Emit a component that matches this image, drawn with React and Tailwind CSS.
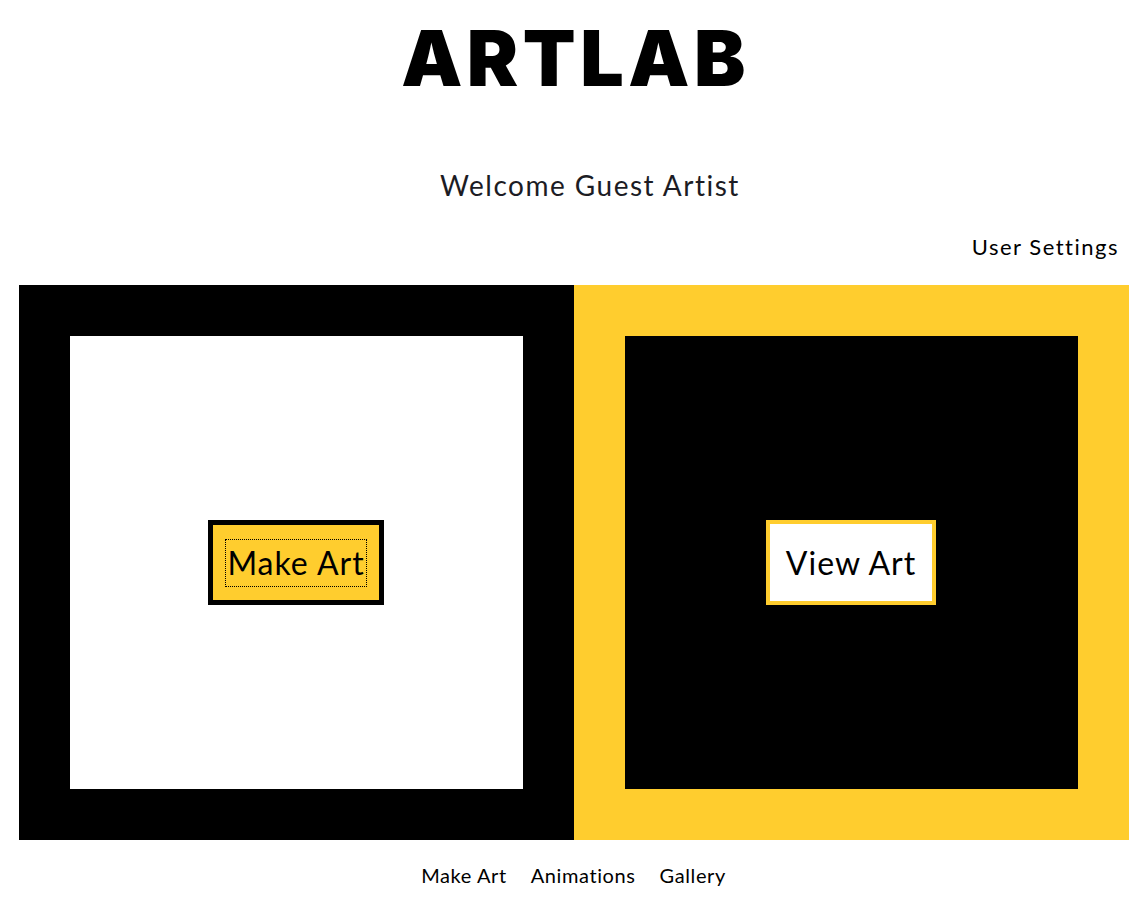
export default function App() {
  return (
    <div className="min-h-[916px] bg-white text-black" style={{ fontFamily: 'Lato, "Noto Sans", sans-serif' }}>
      <header className="pt-[14px] text-center">
        <h1
          className="text-[77px] leading-[88px] font-black tracking-[4.5px] pl-[4px]"
          style={{ fontFamily: 'Inter, "Liberation Sans", sans-serif' }}
        >
          ARTLAB
        </h1>
        <p className="mt-[66px] pl-[33px] text-[28px] leading-[34px] tracking-[1.5px] text-[#1c1c24]">Welcome Guest Artist</p>
      </header>

      <div className="mt-[32px] flex justify-end pr-[28px]">
        <a href="#" className="text-[22px] leading-[26px] tracking-[1.5px]">User Settings</a>
      </div>

      <main className="mt-[25px] flex justify-center">
        <section className="w-[555px] h-[555px] bg-black p-[51px]">
          <div className="w-full h-full bg-white flex items-center justify-center">
            <button className="w-[176px] h-[85px] border-[5px] border-black bg-[#ffcd2e] flex items-center justify-center">
              <span className="border border-dotted border-black px-[1px] py-[4px] text-[32px] leading-[38px] tracking-[1px]">Make Art</span>
            </button>
          </div>
        </section>
        <section className="w-[555px] h-[555px] bg-[#ffcd2e] p-[51px]">
          <div className="w-full h-full bg-black flex items-center justify-center">
            <button className="w-[170px] h-[85px] border-[4px] border-[#ffcd2e] bg-white flex items-center justify-center text-[32px] leading-[38px] tracking-[1px]">
              View Art
            </button>
          </div>
        </section>
      </main>

      <nav className="mt-[22px] flex justify-center gap-[24px] text-[20px] leading-[26px] tracking-[0.6px]">
        <a href="#">Make Art</a>
        <a href="#">Animations</a>
        <a href="#">Gallery</a>
      </nav>
    </div>
  );
}
